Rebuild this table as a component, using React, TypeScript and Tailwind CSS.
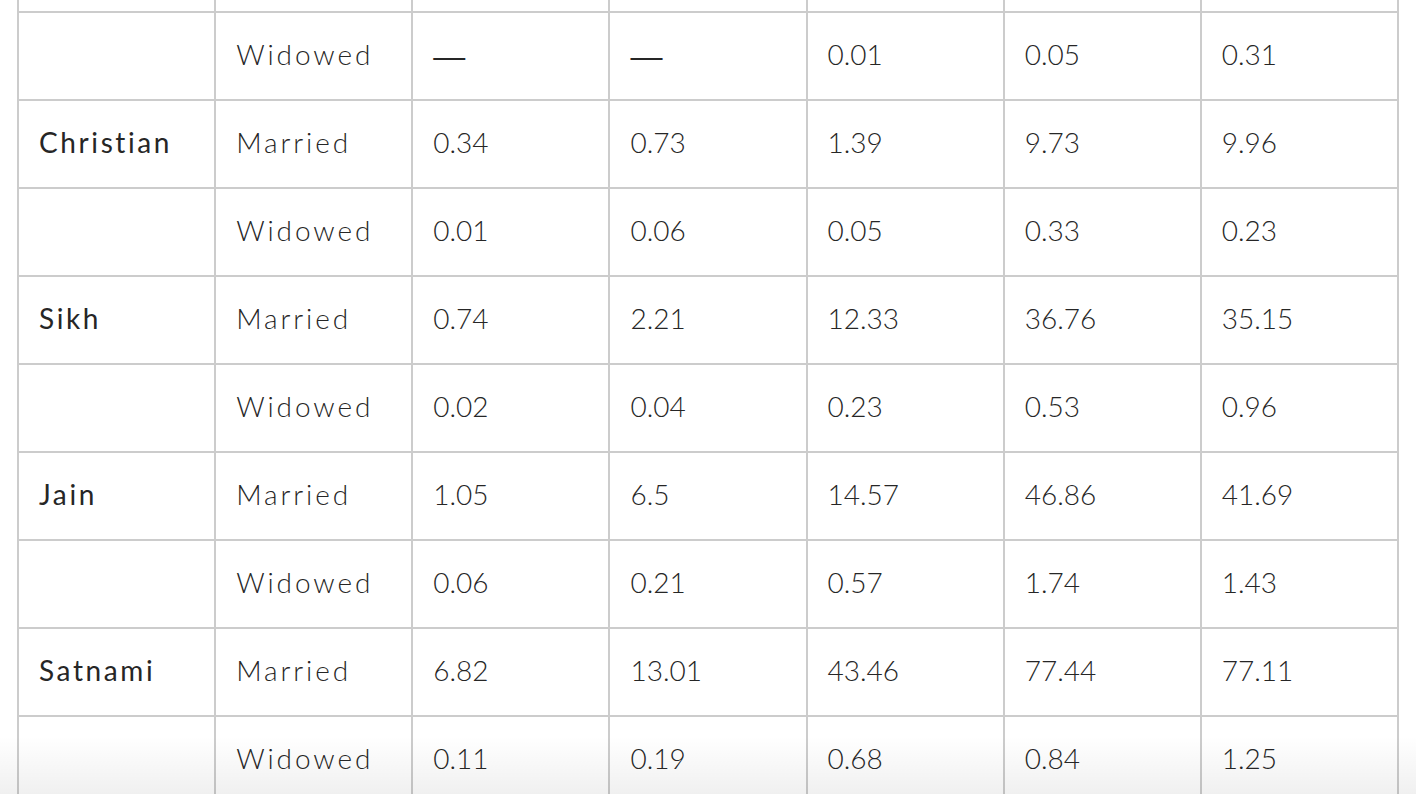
import React from "react";

type Row = { group: string; status: string; vals: string[] };

const rows: Row[] = [
  { group: "", status: "", vals: ["", "", "", "", ""] },
  { group: "", status: "Widowed", vals: ["—", "—", "0.01", "0.05", "0.31"] },
  { group: "Christian", status: "Married", vals: ["0.34", "0.73", "1.39", "9.73", "9.96"] },
  { group: "", status: "Widowed", vals: ["0.01", "0.06", "0.05", "0.33", "0.23"] },
  { group: "Sikh", status: "Married", vals: ["0.74", "2.21", "12.33", "36.76", "35.15"] },
  { group: "", status: "Widowed", vals: ["0.02", "0.04", "0.23", "0.53", "0.96"] },
  { group: "Jain", status: "Married", vals: ["1.05", "6.5", "14.57", "46.86", "41.69"] },
  { group: "", status: "Widowed", vals: ["0.06", "0.21", "0.57", "1.74", "1.43"] },
  { group: "Satnami", status: "Married", vals: ["6.82", "13.01", "43.46", "77.44", "77.11"] },
  { group: "", status: "Widowed", vals: ["0.11", "0.19", "0.68", "0.84", "1.25"] },
  { group: "", status: "", vals: ["", "", "", "", ""] },
];

export default function App() {
  return (
    <div
      className="relative h-[794px] w-full overflow-hidden bg-white"
      style={{ fontFamily: "Lato, 'Open Sans', sans-serif" }}
    >
      <div className="ml-[17px] mt-[-77px] w-[1382px]">
        <table className="w-full table-fixed border-collapse">
          <tbody>
            {rows.map((r, i) => (
              <tr key={i} className="h-[88px]">
                <td className="border-2 border-[#cccccc] px-[20px] pb-[4px] text-[28px] font-normal tracking-[2.6px] text-[#262626]">
                  {r.group}
                </td>
                <td className="border-2 border-[#cccccc] px-[20px] pb-[4px] text-[28px] font-light tracking-[2.9px] text-[#262626]">
                  {r.status}
                </td>
                {r.vals.map((v, j) => (
                  <td
                    key={j}
                    className="border-2 border-[#cccccc] px-[20px] pb-[4px] text-[28px] font-light text-[#262626]"
                  >
                    {v === "—" ? (
                      <span className="relative top-[2px] text-[32px] font-[Liberation_Sans]">—</span>
                    ) : (
                      v
                    )}
                  </td>
                ))}
              </tr>
            ))}
          </tbody>
        </table>
      </div>
      <div className="pointer-events-none absolute inset-x-0 bottom-0 h-[58px] bg-linear-to-b from-transparent to-[rgba(0,0,0,0.06)]" />
    </div>
  );
}
